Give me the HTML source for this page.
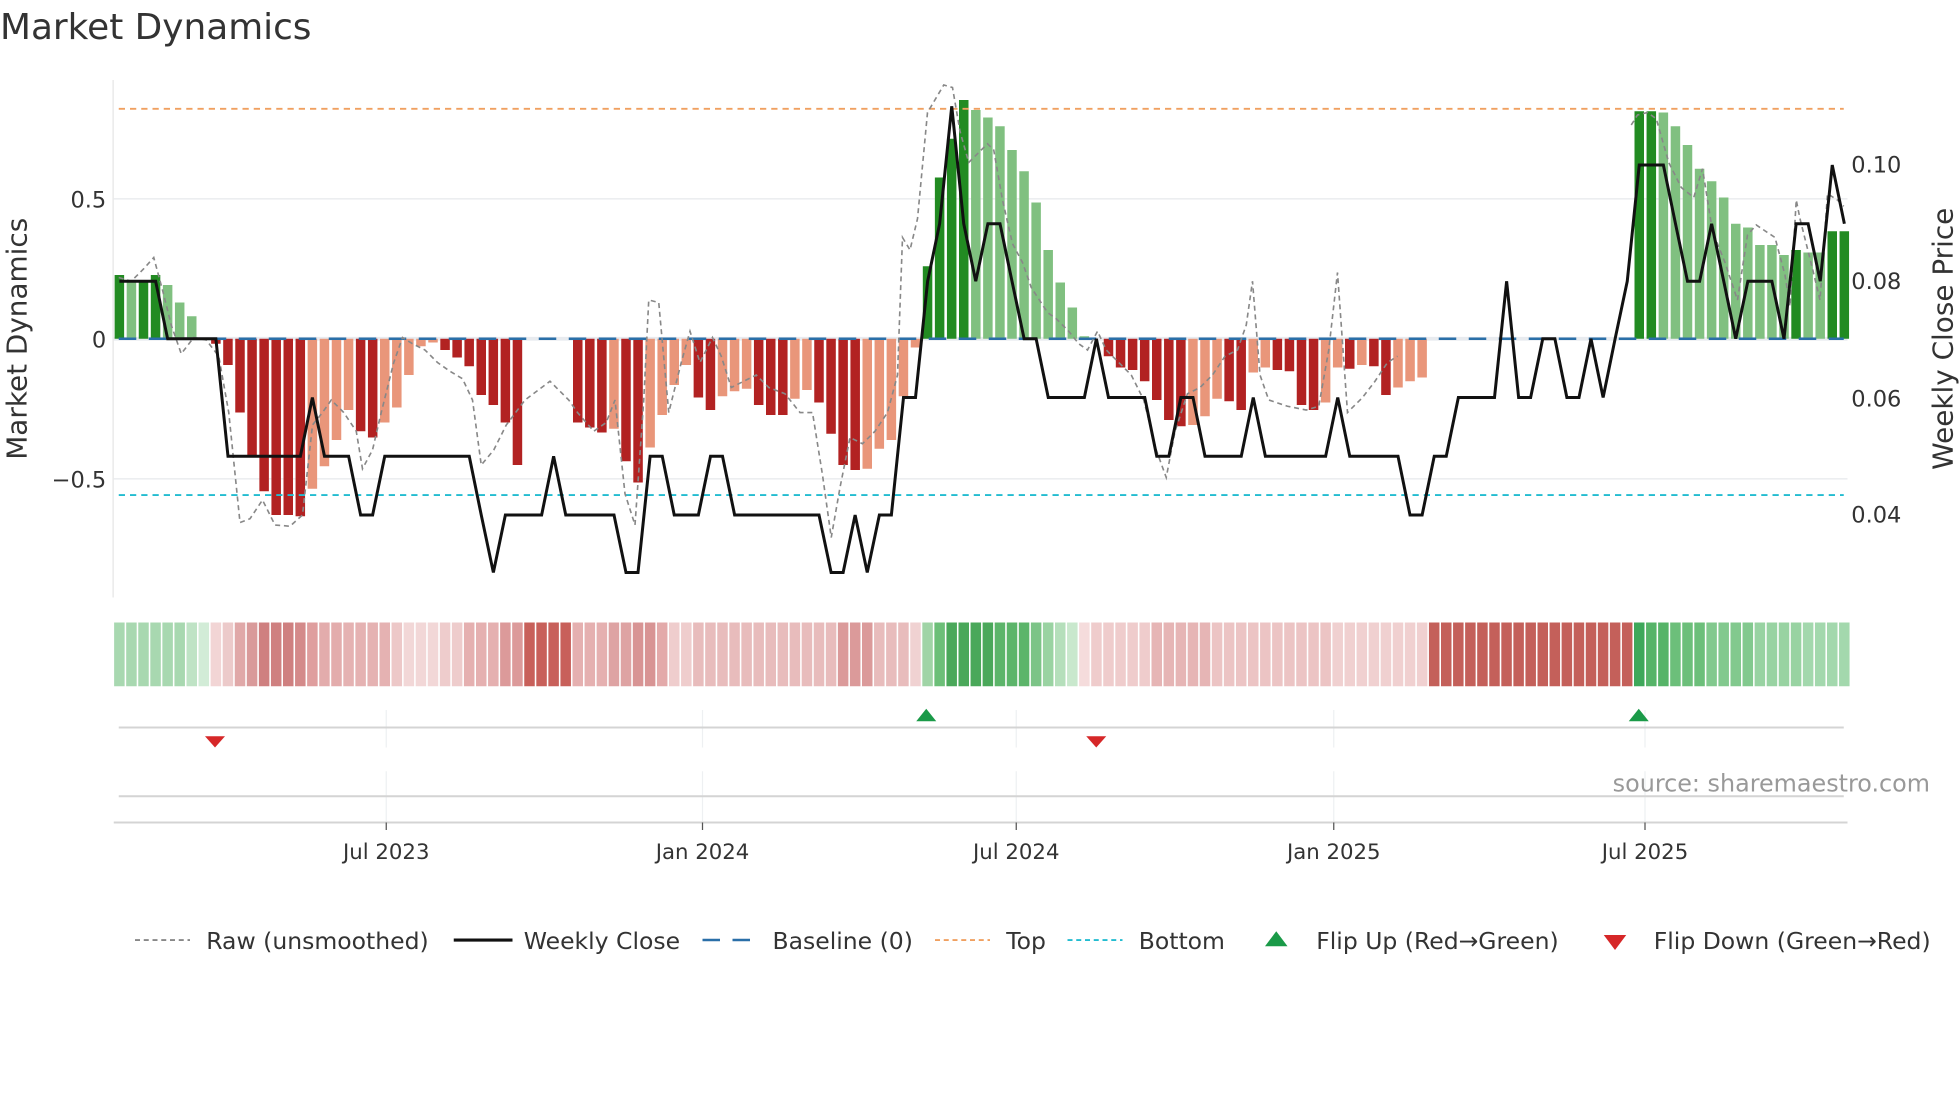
<!DOCTYPE html>
<html><head><meta charset="utf-8"><style>
html,body{margin:0;padding:0;background:#fff;width:1960px;height:1102px;overflow:hidden}
svg{display:block;font-family:"DejaVu Sans","Liberation Sans",sans-serif}
</style></head><body>
<svg id="s" width="1960" height="1102" viewBox="0 0 1568 881.6" xmlns="http://www.w3.org/2000/svg">
<rect width="1568" height="882" fill="#fff"/>
<text x="0" y="31" font-size="28.7" fill="#333">Market Dynamics</text>
<!-- grid -->
<line x1="91" y1="159" x2="1478" y2="159" stroke="#eceef0" stroke-width="1.3"/>
<line x1="91" y1="383" x2="1478" y2="383" stroke="#eceef0" stroke-width="1.3"/>
<line x1="91" y1="271" x2="1478" y2="271" stroke="#e8ebef" stroke-width="3"/>
<line x1="90.5" y1="64" x2="90.5" y2="478" stroke="#e6e6e6" stroke-width="1"/>
<g id="bars"></g>
<line x1="95" y1="87" x2="1475" y2="87" stroke="#f0a060" stroke-width="1.5" stroke-dasharray="5,4"/>
<line x1="95" y1="396" x2="1475" y2="396" stroke="#22bcd0" stroke-width="1.5" stroke-dasharray="5,4"/>
<line x1="95" y1="271" x2="1475" y2="271" stroke="#2a6fa8" stroke-width="2" stroke-dasharray="14,10"/>
<polyline id="raw" fill="none" stroke="#888" stroke-width="1.3" stroke-dasharray="4,3"/>
<polyline id="wk" fill="none" stroke="#111" stroke-width="2.4" stroke-linejoin="miter"/>
<!-- axis labels -->
<g font-size="18" fill="#333">
<text x="85" y="166" text-anchor="end">0.5</text>
<text x="85" y="278" text-anchor="end">0</text>
<text x="85" y="390" text-anchor="end">−0.5</text>
<text x="1481" y="138">0.10</text>
<text x="1481" y="231">0.08</text>
<text x="1481" y="325">0.06</text>
<text x="1481" y="418">0.04</text>
<text transform="translate(21,271) rotate(-90)" text-anchor="middle" font-size="22.3">Market Dynamics</text>
<text transform="translate(1562,271) rotate(-90)" text-anchor="middle" font-size="22.3">Weekly Close Price</text>
</g>
<g id="heat"></g>
<!-- lower panels -->
<g stroke="#eef0f2" stroke-width="1">
<line x1="309" y1="568" x2="309" y2="598"/><line x1="562" y1="568" x2="562" y2="598"/><line x1="813" y1="568" x2="813" y2="598"/><line x1="1067" y1="568" x2="1067" y2="598"/><line x1="1316" y1="568" x2="1316" y2="598"/>
<line x1="309" y1="617" x2="309" y2="657"/><line x1="562" y1="617" x2="562" y2="657"/><line x1="813" y1="617" x2="813" y2="657"/><line x1="1067" y1="617" x2="1067" y2="657"/><line x1="1316" y1="617" x2="1316" y2="657"/>
</g>
<line x1="95" y1="582" x2="1475" y2="582" stroke="#d4d4d4" stroke-width="1.6"/>
<line x1="95" y1="637" x2="1475" y2="637" stroke="#d4d4d4" stroke-width="1.6"/>
<line x1="91" y1="658" x2="1478" y2="658" stroke="#d4d4d4" stroke-width="1.6"/>
<polygon points="164,589 180,589 172,598" fill="#d62728"/>
<polygon points="869,589 885,589 877,598" fill="#d62728"/>
<polygon points="733,577 749,577 741,567" fill="#1a9a48"/>
<polygon points="1303,577 1319,577 1311,567" fill="#1a9a48"/>
<text x="1544" y="633" font-size="19.1" fill="#999" text-anchor="end">source: sharemaestro.com</text>
<g stroke="#555" stroke-width="1"><line x1="309" y1="658" x2="309" y2="664"/><line x1="562" y1="658" x2="562" y2="664"/><line x1="813" y1="658" x2="813" y2="664"/><line x1="1067" y1="658" x2="1067" y2="664"/><line x1="1316" y1="658" x2="1316" y2="664"/></g>
<g font-size="17" fill="#333" text-anchor="middle">
<text x="309" y="687">Jul 2023</text><text x="562" y="687">Jan 2024</text><text x="813" y="687">Jul 2024</text><text x="1067" y="687">Jan 2025</text><text x="1316" y="687">Jul 2025</text>
</g>
<!-- legend -->
<g font-size="18.8" fill="#333">
<line x1="108" y1="752" x2="152" y2="752" stroke="#888" stroke-width="1.5" stroke-dasharray="4,3"/><text x="165" y="759">Raw (unsmoothed)</text>
<line x1="363" y1="752" x2="410" y2="752" stroke="#111" stroke-width="2.5"/><text x="419" y="759">Weekly Close</text>
<line x1="562" y1="752" x2="606" y2="752" stroke="#2a6fa8" stroke-width="2" stroke-dasharray="14,10"/><text x="618" y="759">Baseline (0)</text>
<line x1="748" y1="752" x2="792" y2="752" stroke="#f0a060" stroke-width="1.5" stroke-dasharray="4,3"/><text x="805" y="759">Top</text>
<line x1="854" y1="752" x2="898" y2="752" stroke="#22bcd0" stroke-width="1.5" stroke-dasharray="4,3"/><text x="911" y="759">Bottom</text>
<polygon points="1012,757 1030,757 1021,745" fill="#1a9a48"/><text x="1053" y="759">Flip Up (Red→Green)</text>
<polygon points="1283,748 1301,748 1292,760" fill="#d62728"/><text x="1323" y="759">Flip Down (Green→Red)</text>
</g>
</svg>
<script>
(function(){
var NS="http://www.w3.org/2000/svg";
function X(j){return 95.5+9.65*j;}
var V=[51,47,47,51,43,29,18,0,-4,-21,-59,-94,-122,-141,-141,-142,-120,-102,-81,-57,-74,-79,-67,-55,-29,-6,-3,-9,-15,-22,-45,-53,-67,-101,0,0,0,0,-67,-71,-75,-72,-98,-115,-87,-61,-37,-21,-47,-57,-46,-42,-40,-53,-61,-61,-48,-41,-51,-76,-101,-105,-104,-88,-81,-46,-7,58,129,160,191,183,177,170,151,134,109,71,45,25,2,0,-14,-23,-25,-34,-49,-65,-70,-69,-62,-48,-50,-57,-27,-23,-25,-26,-53,-57,-51,-23,-24,-21,-22,-45,-39,-34,-31];
while(V.length<126)V.push(0);
V=V.concat([182,182,181,170,155,136,126,113,92,89,75,75,67,71,69,69,86,86]);
var g=document.getElementById('bars'),s='';
for(var j=0;j<V.length;j++){var v=V[j];if(v===0)continue;var p=j>0?V[j-1]:0;
var dark=Math.abs(v)>=Math.abs(p)||(p>0)!=(v>0);if(j==141||j==137)dark=false;
var c=v>0?(dark?'#228b22':'#80c080'):(dark?'#b22222':'#e9967a');
var y=v>0?271-v:271;s+='<rect x="'+(X(j)-3.8)+'" y="'+y+'" width="7.6" height="'+Math.abs(v)+'" fill="'+c+'"/>';}
g.innerHTML=s;
var L={};function set(a,b,y){for(var k=a;k<=b;k++)L[k]=y;}
set(0,3,225);set(4,8,271);set(9,15,365);set(16,16,318);set(17,19,365);set(20,21,412);set(22,29,365);set(30,30,412);set(31,31,458);set(32,35,412);set(36,36,365);set(37,41,412);set(42,43,458);set(44,45,365);set(46,48,412);set(49,50,365);set(51,58,412);set(59,60,458);set(61,61,412);set(62,62,458);set(63,64,412);set(65,66,318);set(67,67,225);set(68,68,179);set(69,69,85);set(70,70,179);set(71,71,225);set(72,73,179);set(74,74,225);set(75,76,271);set(77,80,318);set(81,81,271);set(82,85,318);set(86,87,365);set(88,89,318);set(90,93,365);set(94,94,318);set(95,100,365);set(101,101,318);set(102,106,365);set(107,108,412);set(109,110,365);set(111,114,318);set(115,115,225);set(116,117,318);set(118,119,271);set(120,121,318);set(122,122,271);set(123,123,318);set(124,124,271);set(125,125,225);set(126,128,132);set(129,129,179);set(130,131,225);set(132,132,179);set(133,133,225);set(134,134,271);set(135,137,225);set(138,138,271);set(139,140,179);set(141,141,225);set(142,142,132);set(143,143,179);
var pts=[];for(var j=0;j<=143;j++)pts.push(X(j).toFixed(1)+','+L[j]);
document.getElementById('wk').setAttribute('points',pts.join(' '));
var R=[[95,222],[105,225],[115,215],[123,206],[130,232],[137,260],[145,283],[155,270],[165,272],[175,285],[183,330],[192,418],[200,415],[210,400],[220,420],[232,421],[242,412],[250,340],[258,330],[265,320],[275,330],[285,345],[290,375],[298,360],[305,330],[315,290],[322,270],[330,275],[340,280],[350,290],[360,297],[370,303],[378,320],[385,372],[395,360],[405,340],[420,320],[440,305],[455,320],[462,330],[475,345],[485,338],[492,320],[500,395],[508,420],[515,320],[519,240],[527,242],[535,330],[545,290],[552,265],[560,290],[570,270],[577,285],[585,310],[595,305],[605,300],[615,310],[628,315],[640,330],[650,330],[658,380],[665,430],[672,390],[680,350],[690,355],[700,345],[710,330],[718,300],[722,190],[728,200],[734,175],[742,90],[755,68],[762,70],[768,105],[775,130],[785,120],[790,115],[795,120],[802,160],[810,195],[818,210],[825,230],[838,250],[845,255],[855,265],[863,275],[870,280],[878,265],[885,280],[895,290],[905,300],[915,320],[925,360],[933,382],[940,345],[950,315],[960,310],[970,300],[980,285],[990,280],[997,260],[1002,225],[1008,300],[1015,320],[1030,325],[1045,328],[1055,325],[1063,280],[1070,218],[1078,330],[1090,318],[1100,305],[1110,290],[1118,285]];
var R2=[[1305,100],[1310,92],[1318,90],[1325,95],[1335,130],[1345,150],[1355,158],[1362,135],[1370,185],[1380,210],[1390,240],[1398,188],[1405,180],[1420,190],[1428,220],[1432,245],[1437,160],[1440,175],[1450,215],[1456,240],[1462,155],[1470,160],[1475,165]];
document.getElementById('raw').setAttribute('points',R.map(function(p){return p.join(',')}).join(' '));
var r2=document.createElementNS(NS,'polyline');r2.setAttribute('fill','none');r2.setAttribute('stroke','#888');r2.setAttribute('stroke-width','1.3');r2.setAttribute('stroke-dasharray','4,3');
r2.setAttribute('points',R2.map(function(p){return p.join(',')}).join(' '));
document.getElementById('raw').parentNode.insertBefore(r2,document.getElementById('wk'));
var H=[];function h(a,b,c){for(var k=a;k<=b;k++)H[k]=c;}
h(0,5,'#a8d8b0');h(6,6,'#bfe3c5');h(7,7,'#d2ecd7');h(8,8,'#f2d5d5');h(9,9,'#eccaca');h(10,10,'#e0a8a8');h(11,11,'#d99a9a');h(12,14,'#cf8080');h(15,15,'#d48a8a');h(16,16,'#df9e9e');h(17,18,'#e3acac');h(19,22,'#e5b2b2');h(23,23,'#edc8c8');h(24,26,'#f2d7d7');h(27,28,'#eecccc');h(29,31,'#e5b0b0');h(32,33,'#dc9a9a');h(34,37,'#c8605a');h(38,40,'#e5b0b0');h(41,42,'#dea3a3');h(43,44,'#d89494');h(45,45,'#e3aaaa');h(46,47,'#efcdcd');h(48,59,'#e8bcbc');h(60,62,'#db9a9a');h(63,65,'#e8bcbc');h(66,66,'#f0d2d2');h(67,67,'#a0d4a6');h(68,68,'#6cbf78');h(69,72,'#4aa85a');h(73,75,'#5cb56a');h(76,76,'#7cc487');h(77,77,'#9ad3a2');h(78,78,'#b5dfbb');h(79,79,'#c9e8cd');h(80,80,'#f5dcdc');h(81,85,'#efcccc');h(86,90,'#e6b5b5');h(91,100,'#ecc4c4');h(101,108,'#f0d0d0');h(109,125,'#c4605a');h(126,126,'#3ea85a');h(127,128,'#56b468');h(129,131,'#6cbf7a');h(132,135,'#82c98e');h(136,139,'#98d3a2');h(140,143,'#a3d8ad');
var t='';for(var j=0;j<=143;j++)t+='<rect x="'+(X(j)-4.2)+'" y="498" width="8.4" height="51" fill="'+H[j]+'"/>';
document.getElementById('heat').innerHTML=t;
})();
</script>
</body></html>
